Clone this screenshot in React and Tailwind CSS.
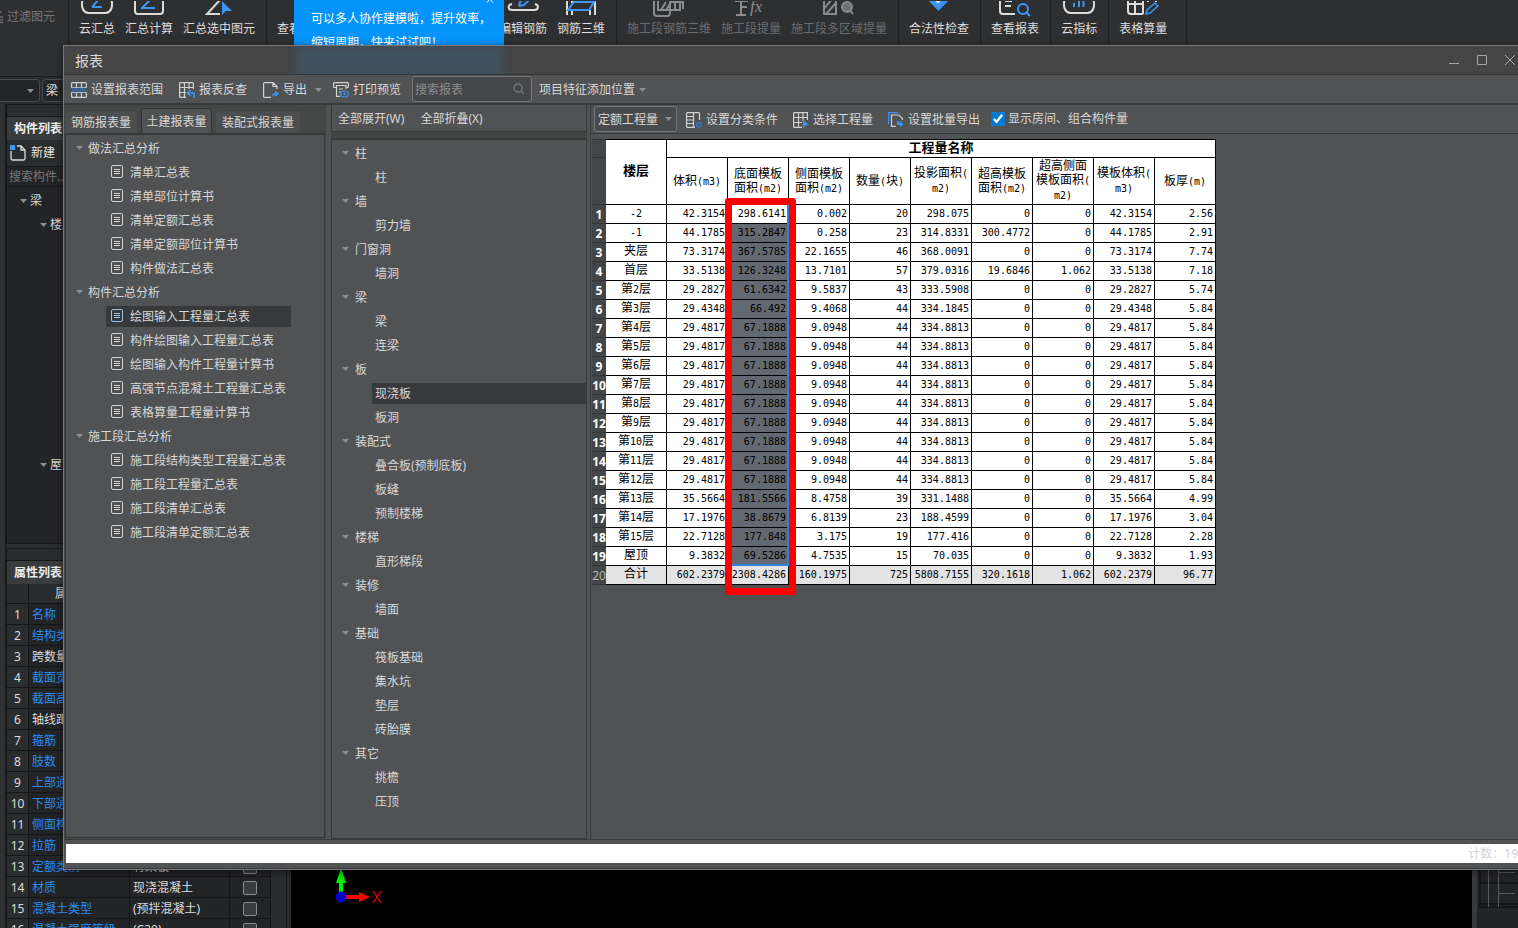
import React from "react";

const FONT = "font-['Noto_Sans','Noto_Sans_CJK_SC',sans-serif]";

const Caret = ({ className = "" }) => (
  <svg className={"shrink-0 " + className} width="7" height="4" viewBox="0 0 7 4">
    <path d="M0 0H7L3.5 4Z" fill="#8d8f91" />
  </svg>
);

/* ---------- Ribbon icons (only the lower part is inside the window) ---------- */
const S = ({ w = 32, children }) => (
  <svg width={w} height="18" viewBox={`0 0 ${w} 18`} fill="none" stroke="#dcdcdc" strokeWidth="2">
    {children}
  </svg>
);
const B = "#3b95f5";

const RibbonIcon = ({ kind }) => {
  switch (kind) {
    case "cloudsum":
      return <S><path d="M3 -4C-1 3 1 12 8 12H24C31 12 33 3 29 -4" /><path d="M11 6L19 -3M11 6H21" stroke={B} /></S>;
    case "sum":
      return <S><path d="M2 -2V10Q2 13 5 13H27Q30 13 30 10V-2" /><path d="M9 7L18 -2M8 7H22" stroke={B} /></S>;
    case "pick":
      return <S><path d="M17 -1L4 13H17" /><path d="M19 0L29 10L23 10L19 14Z" fill={B} stroke="none" /></S>;
    case "view":
      return <S><path d="M6 -2V10Q6 13 9 13H24M11 3H20" /></S>;
    case "edit":
      return <S><path d="M5 3C0 4 1 9 5 9H27C32 9 32 4 28 3" /><path d="M12 5L13 1L17 -3M12 5L17 4L23 -2" stroke={B} /></S>;
    case "steel3d":
      return <S><path d="M2 14V0M30 14V0M7 14V9M25 14V9M6 1H30" /><path d="M3 9H24L29 1H9Z" stroke={B} /></S>;
    case "seg3d":
      return <S><g stroke="#8a8b8c"><path d="M1 -2V12Q1 15 4 15H14Q17 15 17 12V-2M5 -1V9H27V-2M8 9L13 1M13 9L18 1H30M22 9V2M30 -2V8" /></g></S>;
    case "segfx":
      return <S><path d="M1 14H11M6 14V0M0 0H13M6 6H12" stroke="#8a8b8c" /><text x="15" y="11" fontSize="17" fontStyle="italic" fontFamily="Liberation Serif" fill="#8a8b8c" stroke="none">fx</text></S>;
    case "segarea":
      return <S><path d="M1 -2V13H13V-2M1 8L9 -2M3 13L13 2" stroke="#8a8b8c" /><circle cx="24" cy="6" r="5" fill="#707172" stroke="#8a8b8c" /><path d="M27 9L30 13" stroke="#8a8b8c" /></S>;
    case "check":
      return <S><path d="M5 -1L15.500 10L26 -1Z" fill={B} stroke="none" /><path d="M11 -3L15 1L20 -4" stroke="#fff" /></S>;
    case "report":
      return <S><path d="M1 -2V10Q1 13 4 13H16M6 0H13M6 5H12" /><circle cx="24" cy="8" r="5" stroke={B} /><path d="M27 11L31 15" stroke={B} /></S>;
    case "cloudidx":
      return <S><path d="M3 -4C-1 3 1 12 8 12H24C31 12 33 3 29 -4" /><path d="M11 2V6M16 -1V6M20.500 -1V6" stroke={B} /></S>;
    case "gridpen":
      return <S><path d="M1 -2V10Q1 13 4 13H16M8 -2V13M1 3H16M16 -2V13" /><path d="M20 0H22M28 0H30" /><path d="M19 13L20 9L28 2L31 5L23 12Z" fill="#2e2f31" stroke={B} strokeWidth="1.5" /></S>;
    default:
      return <S />;
  }
};

const RIBBON = [
  { items: [["cloudsum", "云汇总"], ["sum", "汇总计算"], ["pick", "汇总选中图元"]] },
  { items: [["view", "查看工程量"], ["edit", "编辑钢筋"], ["steel3d", "钢筋三维"]], wide: true },
  { items: [["seg3d", "施工段钢筋三维"], ["segfx", "施工段提量"], ["segarea", "施工段多区域提量"]], dim: true },
  { items: [["check", "合法性检查"]] },
  { items: [["report", "查看报表"]] },
  { items: [["cloudidx", "云指标"]] },
  { items: [["gridpen", "表格算量"]], last: true },
];

function Ribbon() {
  return (
    <header className="flex h-[77px] shrink-0 overflow-hidden border-b border-[#1b1c1e] bg-[#2e2f31]">
      <button className="flex h-[34px] w-[68px] shrink-0 items-center gap-1 text-[#77787a]">
        <svg width="3" height="12" viewBox="0 0 3 12" stroke="#8a8b8c"><path d="M0 1H2M0 6H3M0 9H3M0 11.500H3" /></svg>
        过滤图元
      </button>
      {RIBBON.map((g, i) => (
        <div
          key={i}
          className={
            "flex shrink-0 gap-[10px] border-l border-[#1f2022] pl-[10px] pr-[11px] " +
            (g.wide ? "w-[350px] [&>button:nth-child(2)]:ml-auto " : "") +
            (g.last ? "w-[79px] border-r " : "") +
            (g.dim ? "text-[#6b6c6e]" : "text-[#dedede]")
          }
        >
          {g.items.map(([k, t]) => (
            <button key={t} className="flex h-10 shrink-0 flex-col items-center whitespace-nowrap pt-px">
              <RibbonIcon kind={k} />
              <span className="leading-5">{t}</span>
            </button>
          ))}
        </div>
      ))}
    </header>
  );
}

/* ---------- Background panels ---------- */
const PROPS = [
  ["名称", 1], ["结构类别", 1], ["跨数量", 0], ["截面宽度(mm)", 1], ["截面高度(mm)", 1], ["轴线距梁左边", 0],
  ["箍筋", 1], ["肢数", 1], ["上部通长筋", 1], ["下部通长筋", 1], ["侧面构造或受", 1], ["拉筋", 1],
  ["定额类别", 1, "有梁板"], ["材质", 1, "现浇混凝土"], ["混凝土类型", 1, "(预拌混凝土)"], ["混凝土强度等级", 1, "(C30)"],
];

function SideDock() {
  return (
    <aside className="flex w-[281px] shrink-0 flex-col">
      <section className="flex h-[440px] shrink-0 flex-col border border-[#17181a] bg-[#232426]">
        <div className="h-[11px] bg-[#2c2d2f]" />
        <h2 className="flex h-6 items-center border-t border-[#17181a] bg-[#3a3b3d] pl-[7px] font-bold text-[#eeeeee]">构件列表</h2>
        <div className="flex h-[27px] items-center border-b border-[#17181a] bg-[#2b2c2e] pl-[3px]">
          <button className="flex items-center gap-[5px] text-[#e6e6e6]">
            <svg width="16" height="16" viewBox="0 0 16 16" fill="none" stroke="#dcdcdc" strokeWidth="1.300">
              <path d="M1 6V13.500Q1 15 2.500 15H13.500Q15 15 15 13.500V5L11 1H7M11 1V5H15" />
              <path d="M0 0H5V5H0Z" fill={B} stroke="none" />
            </svg>
            新建
          </button>
        </div>
        <input aria-label="搜索构件" placeholder="搜索构件..." className="h-5 border-b border-[#17181a] bg-transparent pl-[2px] placeholder:text-[#77787a]" />
        <ul className="pt-[2px] text-[#d8d8d8]">
          <li className="flex h-6 items-center gap-[3px] pl-[13px]"><Caret />梁</li>
          <li className="flex h-6 items-center gap-[3px] pl-[33px]"><Caret />楼层1</li>
          <li className="mt-[216px] flex h-6 items-center gap-[3px] pl-[33px]"><Caret />屋顶</li>
        </ul>
      </section>
      <section className="mt-1 flex-1 border border-[#17181a] bg-[#2b2c2e]">
        <div className="h-[11px]" />
        <h2 className="flex h-6 items-center border-t border-[#17181a] bg-[#3a3b3d] pl-[7px] font-bold text-[#eeeeee]">属性列表</h2>
        <table className="w-[264px] table-fixed border-separate border-spacing-0 text-[#dedede] [&_td]:h-[21px] [&_td]:overflow-hidden [&_td]:whitespace-nowrap [&_td]:border-b [&_td]:border-r [&_td]:border-[#151618] [&_td]:px-0 [&_td]:pb-0 [&_td]:pt-[2px] [&_th]:h-5 [&_th]:border-b [&_th]:border-r [&_th]:border-[#151618] [&_th]:p-0 [&_th]:font-normal">
          <colgroup><col className="w-[22px]" /><col className="w-[101px]" /><col className="w-[100px]" /><col /></colgroup>
          <thead><tr><th /><th className="pl-6">属性名称</th><th>属性值</th><th>附加</th></tr></thead>
          <tbody>
            {PROPS.map(([n, blue, v], i) => (
              <tr key={n}>
                <td className="text-center">{i + 1}</td>
                <td className={blue ? "bg-[#232426] text-[#2b8cf0]" : "bg-[#232426]"}><span className="pl-[3px]">{n}</span></td>
                <td className="bg-[#232426]"><span className="pl-[3px]">{v}</span></td>
                <td className="bg-[#232426]">
                  <input type="checkbox" aria-label={n} className="mx-auto mb-px block size-[14px] appearance-none rounded-[2px] border border-[#8a8b8c] bg-[#3a3b3d]" />
                </td>
              </tr>
            ))}
          </tbody>
        </table>
      </section>
    </aside>
  );
}

function Workspace() {
  return (
    <>
      <div className="flex h-[27px] shrink-0 items-center gap-[2px] bg-[#2b2c2e]">
        <button aria-label="楼层" className="flex h-[23px] w-10 items-center justify-end rounded-r border border-l-0 border-[#48494b] bg-[#242527] pr-[5px]"><Caret /></button>
        <button className="flex h-[23px] w-24 items-center rounded border border-[#48494b] bg-[#242527] pl-[3px] text-[#e0e0e0]">梁</button>
      </div>
      <div className="flex min-h-0 flex-1 overflow-hidden bg-[#2b2c2e]">
        <div className="w-[6px] shrink-0 border-r border-[#17181a] bg-[#303133]" />
        <SideDock />
        <div className="relative ml-1 flex-1 bg-black">
          <svg className="absolute bottom-5 left-[42px]" width="52" height="44" viewBox="0 0 52 44">
            <path d="M8 34V14" stroke="#00f000" strokeWidth="4" />
            <path d="M3 19L8 4L13 19Z" fill="#00f000" />
            <path d="M8 33H27" stroke="#f00" strokeWidth="4" />
            <path d="M26 28L37 33L26 38Z" fill="#f00" />
            <circle cx="8" cy="33" r="5.500" fill="#0000c8" />
            <path d="M40 27L48 39M48 27L40 39" stroke="#f00" strokeWidth="1.300" />
          </svg>
        </div>
        <div className="flex w-[46px] shrink-0 flex-col justify-end border-l-[5px] border-[#38393b] bg-[#232426] pb-5">
          <svg width="41" height="60" viewBox="0 0 41 60" fill="none">
            <path d="M3 0V59H41M3 35H41M3 56H41" stroke="#141517" strokeWidth="2" />
            <path d="M11.500 0V59M21.500 0V59M22 24.500H38M22 45.500H38" stroke="#58595b" />
          </svg>
        </div>
      </div>
    </>
  );
}

/* ---------- Dialog ---------- */
const I = ({ children }) => (
  <svg className="shrink-0" width="16" height="16" viewBox="0 0 16 16" fill="none" stroke="#d2d2d2" strokeWidth="1.200">{children}</svg>
);
const IconRange = () => <I><path d="M.6 5V1.600Q.6.6 1.600.6H14.400Q15.400.6 15.400 1.600V5M5.500.6V5M10.500.6V5M.6 11V14.400Q.6 15.400 1.600 15.400H14.400Q15.400 15.400 15.400 14.400V11M5.500 11V15.400M10.500 11V15.400" /><path d="M0 5.500H16M0 10.500H16" stroke="#a9b8c6" /><path d="M1 7H15M1 9H15" stroke="#2f7fd6" strokeDasharray="1 1" /></I>;
const IconTrace = () => <I><path d="M7 15.400H1.600Q.6 15.400.6 14.400V1.600Q.6.6 1.600.6H13.400Q14.400.6 14.400 1.600V7M.6 5.500H14.400M.6 10.500H7M5.500.6V15.400M10 .6V7" /><path d="M15 16V11H9M11.500 8L8.500 11L11.500 14" stroke={B} strokeWidth="1.600" /></I>;
const IconExport = () => <I><path d="M8 15.400H1.600Q.6 15.400.6 14.400V1.600Q.6.6 1.600.6H10L14 4.500V7M10 .6V4.500H14" /><path d="M9 15Q9 11 12 11V8.500L16 12L12 15V13Q10 13 9 15Z" fill={B} stroke="none" /></I>;
const IconPrint = () => <I><path d="M3 5.500H1.600Q.6 5.500.6 4.500V1.600Q.6.6 1.600.6H14.400Q15.400.6 15.400 1.600V4.500Q15.400 5.500 14.400 5.500H13M3 3.500H13V7M3.500 3.500V14.400H7M6 7H10M6 10H8" /><ellipse cx="11.500" cy="12" rx="3.900" ry="3" stroke={B} /><circle cx="11.500" cy="12" r="1.200" fill={B} stroke="none" /></I>;
const IconClassify = () => <I><path d="M9 15.400H1.600Q.6 15.400.6 14.400V1.600Q.6.6 1.600.6H9M9 .6H12.500Q13.500.6 13.500 1.600V8M7.500.6V15.400M.6 4.500H7.500M.6 8H7.500M.6 11.500H7.500" /><circle cx="12.800" cy="12.800" r="2.200" stroke="#2f7fd6" strokeWidth="2" strokeDasharray="1.500 .6" /></I>;
const IconSelect = () => <I><path d="M9 15.400H1.600Q.6 15.400.6 14.400V1.600Q.6.6 1.600.6H14.400V8M.6 5.500H14.400M.6 10.500H9M5.500.6V15.400M10 .6V9" /><path d="M10 8L16 13L12.800 13.200L10 16Z" fill={B} stroke="none" /></I>;
const IconBatch = () => <I><path d="M.6 12V.6H10" stroke={B} /><path d="M8 14.400H3.500V3H11L14.400 6.500V8" /><path d="M9 9V13H12V15.500L15.500 12.200L12 9V11H11V9Z" fill={B} stroke="none" /></I>;
const IconDoc = ({ active }) => (
  <svg className="mb-[3px] shrink-0" width="13" height="13" viewBox="0 0 13 13" fill="none" stroke={active ? "#9cc4e8" : "#d2d2d2"}>
    <rect x=".5" y=".5" width="11" height="12" rx="1.500" /><path d="M3 4.500H9M3 6.500H9M3 8.500H9" />
  </svg>
);

const ToolBtn = ({ icon, children, className = "" }) => (
  <button className={"flex shrink-0 items-center gap-1 whitespace-nowrap pt-[2px] " + className}>{icon}{children}</button>
);

const REPORTS = [
  ["做法汇总分析", ["清单汇总表", "清单部位计算书", "清单定额汇总表", "清单定额部位计算书", "构件做法汇总表"]],
  ["构件汇总分析", ["绘图输入工程量汇总表", "构件绘图输入工程量汇总表", "绘图输入构件工程量计算书", "高强节点混凝土工程量汇总表", "表格算量工程量计算书"]],
  ["施工段汇总分析", ["施工段结构类型工程量汇总表", "施工段工程量汇总表", "施工段清单汇总表", "施工段清单定额汇总表"]],
];
const PARTS = [
  ["柱", ["柱"]], ["墙", ["剪力墙"]], ["门窗洞", ["墙洞"]], ["梁", ["梁", "连梁"]], ["板", ["现浇板", "板洞"]],
  ["装配式", ["叠合板(预制底板)", "板缝", "预制楼梯"]], ["楼梯", ["直形梯段"]], ["装修", ["墙面"]],
  ["基础", ["筏板基础", "集水坑", "垫层", "砖胎膜"]], ["其它", ["挑檐", "压顶"]],
];

const HEADS = [
  ["体积", "(m3)"], ["底面模板\n面积", "(m2)"], ["侧面模板\n面积", "(m2)"], ["数量", "(块)"], ["投影面积", "(\nm2)"],
  ["超高模板\n面积", "(m2)"], ["超高侧面\n模板面积", "(\nm2)"], ["模板体积", "(\nm3)"], ["板厚", "(m)"],
];
const ROWS = `-2 42.3154 298.6141 0.002 20 298.075 0 0 42.3154 2.56
-1 44.1785 315.2847 0.258 23 314.8331 300.4772 0 44.1785 2.91
夹层 73.3174 367.5785 22.1655 46 368.0091 0 0 73.3174 7.74
首层 33.5138 126.3248 13.7101 57 379.0316 19.6846 1.062 33.5138 7.18
第2层 29.2827 61.6342 9.5837 43 333.5908 0 0 29.2827 5.74
第3层 29.4348 66.492 9.4068 44 334.1845 0 0 29.4348 5.84
第4层 29.4817 67.1888 9.0948 44 334.8813 0 0 29.4817 5.84
第5层 29.4817 67.1888 9.0948 44 334.8813 0 0 29.4817 5.84
第6层 29.4817 67.1888 9.0948 44 334.8813 0 0 29.4817 5.84
第7层 29.4817 67.1888 9.0948 44 334.8813 0 0 29.4817 5.84
第8层 29.4817 67.1888 9.0948 44 334.8813 0 0 29.4817 5.84
第9层 29.4817 67.1888 9.0948 44 334.8813 0 0 29.4817 5.84
第10层 29.4817 67.1888 9.0948 44 334.8813 0 0 29.4817 5.84
第11层 29.4817 67.1888 9.0948 44 334.8813 0 0 29.4817 5.84
第12层 29.4817 67.1888 9.0948 44 334.8813 0 0 29.4817 5.84
第13层 35.5664 181.5566 8.4758 39 331.1488 0 0 35.5664 4.99
第14层 17.1976 38.8679 6.8139 23 188.4599 0 0 17.1976 3.04
第15层 22.7128 177.848 3.175 19 177.416 0 0 22.7128 2.28
屋顶 9.3832 69.5286 4.7535 15 70.035 0 0 9.3832 1.93
合计 602.2379 2308.4286 160.1975 725 5808.7155 320.1618 1.062 602.2379 96.77`
  .split("\n").map((r) => r.split(" "));

const MONO = "font-['DejaVu_Sans_Mono','Noto_Sans_CJK_SC',monospace] text-[10px]";
const Mixed = ({ text }) =>
  text.split(/([\x21-\x7e]+)/).filter(Boolean).map((p, i) =>
    /^[\x21-\x7e]/.test(p) ? <span key={i} className={MONO}>{p}</span> : <React.Fragment key={i}>{p}</React.Fragment>
  );

const CELL = "overflow-hidden whitespace-nowrap border-b border-r border-black px-0 pt-0";
const RH = "border-b border-[#333537] bg-[#434547] p-0";

function QuantityTable() {
  return (
    <div className="relative w-[624px]">
      <table className="w-full table-fixed border-separate border-spacing-0 bg-white text-xs leading-[14px] text-black">
        <colgroup>
          <col className="w-[14px]" />
          {Array.from({ length: 10 }, (_, i) => <col key={i} className="w-[61px]" />)}
        </colgroup>
        <thead>
          <tr className="h-[19px]">
            <th className={RH + " border-t"} />
            <th rowSpan={2} className={CELL + " border-t pb-1 text-[13px]"}>楼层</th>
            <th colSpan={9} className={CELL + " border-t pb-[3px] text-[13px]"}>工程量名称</th>
          </tr>
          <tr className="h-[47px]">
            <th className={RH} />
            {HEADS.map(([a, b]) => (
              <th key={a} className={CELL + " pb-0 font-normal"}>
                <span className="whitespace-pre"><Mixed text={a + b.split("\n")[0]} /></span>
                {b.includes("\n") && <><br /><Mixed text={b.split("\n")[1]} /></>}
              </th>
            ))}
          </tr>
        </thead>
        <tbody>
          {ROWS.map((r, i) => {
            const total = i === 19;
            return (
              <tr key={r[0]} className={"h-[19px] " + (total ? "bg-[#e3e3e3]" : "")}>
                <th className={RH + (total ? " font-normal text-[#b5b6b8]" : " font-bold text-white")}>
                  <span className="flex justify-center pt-px">{i + 1}</span>
                </th>
                {r.map((v, j) => (
                  <td
                    key={j}
                    className={CELL + " pb-[2px]" + (j === 0 ? " text-center" : " pr-[2px] text-right") + (j === 2 && i > 0 && !total ? " bg-[#626970]" : "")}
                  >
                    <Mixed text={v} />
                  </td>
                ))}
              </tr>
            );
          })}
        </tbody>
      </table>
      <div className="absolute left-[136px] top-[66px] h-[361px] w-[61px] border-b-2 border-r-2 border-[#2f7fe0]" />
      <div className="absolute left-[133px] top-[59px] h-[397px] w-[71px] rounded-[3px] border-[7px] border-[#ff0000]" />
    </div>
  );
}

function ReportDialog() {
  return (
    <div role="dialog" aria-label="报表" className="absolute bottom-[58px] left-[63px] right-0 top-[45px] flex flex-col overflow-hidden border border-r-0 border-[#77787a] bg-[#515254] text-[#d8d8d8] shadow-[0_2px_8px_rgba(0,0,0,0.5)]">
      <div className="relative flex h-[29px] shrink-0 items-center overflow-hidden border-b border-[#343537] bg-[#444544] pl-[11px]">
        <div className="absolute left-[232px] top-0 h-8 w-[206px] bg-[#40525f] blur-xs" />
        <h1 className="pt-px text-sm">报表</h1>
        <div className="ml-auto flex items-center gap-4 pr-[2px]">
          {[["最小化", "M1 9.500H11"], ["最大化", "M1.500 1.500H10.500V10.500H1.500Z"], ["关闭", "M1 1L11 11M11 1L1 11"]].map(([l, d]) => (
            <button key={l} aria-label={l}>
              <svg width="12" height="12" viewBox="0 0 12 12" fill="none" stroke="#a6a7a8" strokeWidth="1"><path d={d} /></svg>
            </button>
          ))}
        </div>
      </div>

      <div className="flex h-[30px] shrink-0 items-center border-b-2 border-[#38393b] pl-[7px]">
        <ToolBtn icon={<IconRange />}>设置报表范围</ToolBtn>
        <ToolBtn icon={<IconTrace />} className="ml-4">报表反查</ToolBtn>
        <ToolBtn icon={<IconExport />} className="ml-4">导出<Caret className="ml-1" /></ToolBtn>
        <ToolBtn icon={<IconPrint />} className="ml-[11px]">打印预览</ToolBtn>
        <label className="ml-[11px] flex h-[26px] w-[120px] items-center rounded-[3px] border border-[#747678] bg-[#444648] px-[2px]">
          <input aria-label="搜索报表" placeholder="搜索报表" className="min-w-0 flex-1 bg-transparent pt-px outline-none placeholder:text-[#8c8e90]" />
          <svg className="mr-1" width="12" height="12" viewBox="0 0 12 12" fill="none" stroke="#77797b" strokeWidth="1.300"><circle cx="5" cy="5" r="4" /><path d="M8 8L11 11" /></svg>
        </label>
        <ToolBtn className="ml-[7px]">项目特征添加位置<Caret /></ToolBtn>
      </div>

      <div className="flex min-h-0 flex-1 border-b border-[#38393b]">
        <div className="flex w-[262px] shrink-0 flex-col bg-[#454746] pb-px">
          <div role="tablist" className="flex h-7 items-end gap-1 pl-px">
            <button role="tab" className="h-[22px] w-[72px] rounded-t bg-[#4c4e4f] pt-[2px]">钢筋报表量</button>
            <button role="tab" aria-selected="true" className="h-[25px] w-[71px] rounded-t-[3px] border border-b-0 border-[#333537] bg-[#515254] pt-px">土建报表量</button>
            <button role="tab" className="h-[22px] w-[84px] rounded-t bg-[#4c4e4f] pt-[2px]">装配式报表量</button>
          </div>
          <ul className="mx-px flex-1 overflow-hidden border border-t-2 border-[#38393b] bg-[#515254] pt-[1px]">
            {REPORTS.map(([g, items]) => (
              <li key={g}>
                <div className="flex h-6 items-center gap-[5px] pl-[10px] pt-[2px]"><Caret className="mb-[2px]" />{g}</div>
                <ul>
                  {items.map((t) => (
                    <li key={t} className="flex h-6 items-center pl-10">
                      <a href="#" className={"flex h-[21px] w-[185px] items-center gap-[6px] whitespace-nowrap pl-[5px] pt-[2px] " + (t === "绘图输入工程量汇总表" ? "bg-[#38393b]" : "")}>
                        <IconDoc active={t === "绘图输入工程量汇总表"} />{t}
                      </a>
                    </li>
                  ))}
                </ul>
              </li>
            ))}
          </ul>
        </div>

        <div className="ml-[5px] flex w-[256px] shrink-0 flex-col bg-[#434544]">
          <div className="mb-[6px] flex h-[27px] items-center gap-4 border border-t-0 border-[#38393b] bg-[#515254] pl-[6px] pt-[2px]">
            <button>全部展开(W)</button>
            <button>全部折叠(X)</button>
          </div>
          <ul className="flex-1 overflow-hidden border border-t-2 border-[#38393b] bg-[#515254] pt-[1px]">
            {PARTS.map(([g, items]) => (
              <li key={g}>
                <div className="flex h-6 items-center gap-[6px] pl-[10px] pt-[2px]"><Caret className="mb-[2px]" />{g}</div>
                <ul>
                  {items.map((t) => (
                    <li key={t} className="flex h-6 items-center pl-10">
                      <a href="#" className={"flex h-[21px] flex-1 items-center pl-[3px] pt-[2px] " + (t === "现浇板" ? "bg-[#38393b]" : "")}>{t}</a>
                    </li>
                  ))}
                </ul>
              </li>
            ))}
          </ul>
        </div>

        <div className="ml-[3px] flex min-w-0 flex-1 flex-col border-l border-[#38393b]">
          <div className="flex h-[29px] shrink-0 items-center border-b border-[#38393b] pl-[3px]">
            <div className="relative">
              <select aria-label="工程量类型" className="h-[26px] w-[83px] appearance-none rounded-[3px] border border-[#747678] bg-[#484a4c] pl-[3px] pt-px text-[#d8d8d8]">
                <option>定额工程量</option>
              </select>
              <Caret className="pointer-events-none absolute right-[5px] top-[11px]" />
            </div>
            <ToolBtn icon={<IconClassify />} className="ml-[9px]">设置分类条件</ToolBtn>
            <ToolBtn icon={<IconSelect />} className="ml-[15px]">选择工程量</ToolBtn>
            <ToolBtn icon={<IconBatch />} className="ml-[15px]">设置批量导出</ToolBtn>
            <label className="ml-[11px] flex items-center gap-[3px] whitespace-nowrap">
              <input type="checkbox" defaultChecked className="size-[14px] accent-[#0078d4]" />
              显示房间、组合构件量
            </label>
          </div>
          <div className="flex-1 overflow-hidden pl-px pt-[5px]">
            <QuantityTable />
          </div>
        </div>
      </div>

      <div className="h-[29px] shrink-0 overflow-hidden border-b border-[#38393b] pl-[2px] pt-1">
        <div className="flex h-[19px] items-center justify-end whitespace-nowrap bg-white pt-px text-[#d4d4d4]">计数：19</div>
      </div>
    </div>
  );
}

export default function App() {
  return (
    <main className={"relative flex h-screen flex-col overflow-hidden bg-[#2b2c2e] text-xs " + FONT}>
      <Ribbon />
      <Workspace />
      <div className="absolute left-[294px] top-0 h-[60px] w-[210px] bg-[#0594fb] pl-[17px] pt-[7px] leading-6 whitespace-nowrap text-white">
        <p>可以多人协作建模啦，提升效率，</p>
        <p>缩短周期，快来试试吧！</p>
        <button aria-label="关闭提示" className="absolute right-[10px] top-0">
          <svg width="8" height="3" viewBox="0 0 8 3" stroke="#fff"><path d="M1 2.500L4 -1L7 2.500" fill="none" /></svg>
        </button>
      </div>
      <ReportDialog />
    </main>
  );
}
